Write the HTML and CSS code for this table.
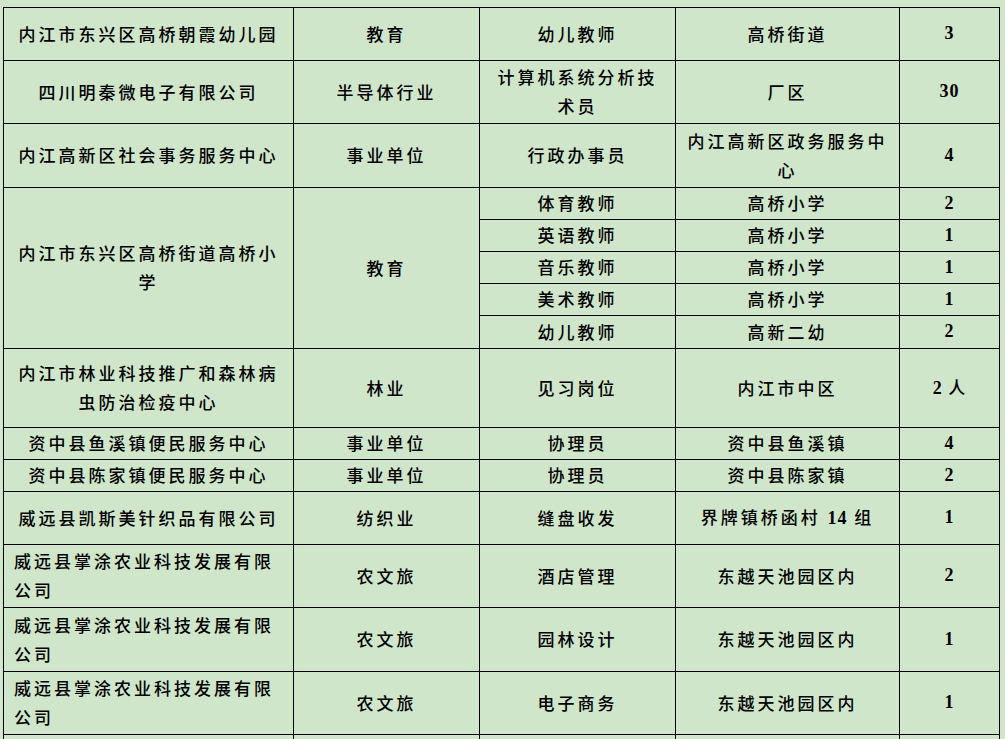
FILE: index.html
```html
<!DOCTYPE html>
<html lang="zh-CN">
<head>
<meta charset="utf-8">
<title>岗位表</title>
<link rel="stylesheet" href="styles.css">
</head>
<body>
<table class="jobs">
  <colgroup>
    <col class="c1"><col class="c2"><col class="c3"><col class="c4"><col class="c5">
  </colgroup>
  <tbody>
    <tr class="h53"><td>内江市东兴区高桥朝霞幼儿园</td><td>教育</td><td>幼儿教师</td><td>高桥街道</td><td class="num">3</td></tr>
    <tr class="h63"><td>四川明秦微电子有限公司</td><td>半导体行业</td><td>计算机系统分析技术员</td><td>厂区</td><td class="num">30</td></tr>
    <tr class="h64"><td>内江高新区社会事务服务中心</td><td>事业单位</td><td>行政办事员</td><td>内江高新区政务服务中心</td><td class="num">4</td></tr>
    <tr class="h32"><td rowspan="5">内江市东兴区高桥街道高桥小学</td><td rowspan="5">教育</td><td>体育教师</td><td>高桥小学</td><td class="num">2</td></tr>
    <tr class="h32"><td>英语教师</td><td>高桥小学</td><td class="num">1</td></tr>
    <tr class="h32"><td>音乐教师</td><td>高桥小学</td><td class="num">1</td></tr>
    <tr class="h32"><td>美术教师</td><td>高桥小学</td><td class="num">1</td></tr>
    <tr class="h33"><td>幼儿教师</td><td>高新二幼</td><td class="num">2</td></tr>
    <tr class="h79"><td>内江市林业科技推广和森林病虫防治检疫中心</td><td>林业</td><td>见习岗位</td><td>内江市中区</td><td class="num">2 <span class="cjk">人</span></td></tr>
    <tr class="h32"><td>资中县鱼溪镇便民服务中心</td><td>事业单位</td><td>协理员</td><td>资中县鱼溪镇</td><td class="num">4</td></tr>
    <tr class="h32"><td>资中县陈家镇便民服务中心</td><td>事业单位</td><td>协理员</td><td>资中县陈家镇</td><td class="num">2</td></tr>
    <tr class="h53"><td>威远县凯斯美针织品有限公司</td><td>纺织业</td><td>缝盘收发</td><td>界牌镇桥函村 <span class="digits">14</span> 组</td><td class="num">1</td></tr>
    <tr class="h63"><td class="left">威远县掌涂农业科技发展有限公司</td><td>农文旅</td><td>酒店管理</td><td>东越天池园区内</td><td class="num">2</td></tr>
    <tr class="h64"><td class="left">威远县掌涂农业科技发展有限公司</td><td>农文旅</td><td>园林设计</td><td>东越天池园区内</td><td class="num">1</td></tr>
    <tr class="h63"><td class="left">威远县掌涂农业科技发展有限公司</td><td>农文旅</td><td>电子商务</td><td>东越天池园区内</td><td class="num">1</td></tr>
    <tr class="h63"><td></td><td></td><td></td><td></td><td class="num"></td></tr>
  </tbody>
</table>
</body>
</html>
```
FILE: styles.css
```css
html, body {
  margin: 0;
  padding: 0;
  background: #cfe6cb;
}

body {
  padding: 7px 0 0 3px;
  font-family: "Liberation Serif", "Noto Sans CJK SC", serif;
  color: #000;
}

.jobs {
  border-collapse: collapse;
  table-layout: fixed;
  width: 996px;
}

.c1 { width: 290px; }
.c2 { width: 186px; }
.c3 { width: 196px; }
.c4 { width: 224px; }
.c5 { width: 100px; }

.jobs td {
  border: 1px solid #000;
  padding: 0 10px 2px;
  text-align: center;
  vertical-align: middle;
  font-size: 17px;
  font-weight: 500;
  letter-spacing: 3px;
  line-height: 29px;
  font-family: "Noto Sans CJK SC", sans-serif;
}

.jobs td.left {
  text-align: left;
}

.jobs td.num {
  font-family: "Liberation Serif", "Noto Sans CJK SC", serif;
  font-weight: bold;
  font-size: 18px;
  letter-spacing: 1px;
  padding-bottom: 1px;
}

.cjk {
  font-family: "Noto Sans CJK SC", sans-serif;
  font-weight: 500;
  font-size: 17px;
}

.digits {
  font-family: "Liberation Serif", serif;
  font-weight: bold;
  font-size: 18px;
  letter-spacing: 1px;
}

.h32 { height: 32px; }
.h33 { height: 33px; }
.h53 { height: 53px; }
.h63 { height: 63px; }
.h64 { height: 64px; }
.h79 { height: 79px; }
```
